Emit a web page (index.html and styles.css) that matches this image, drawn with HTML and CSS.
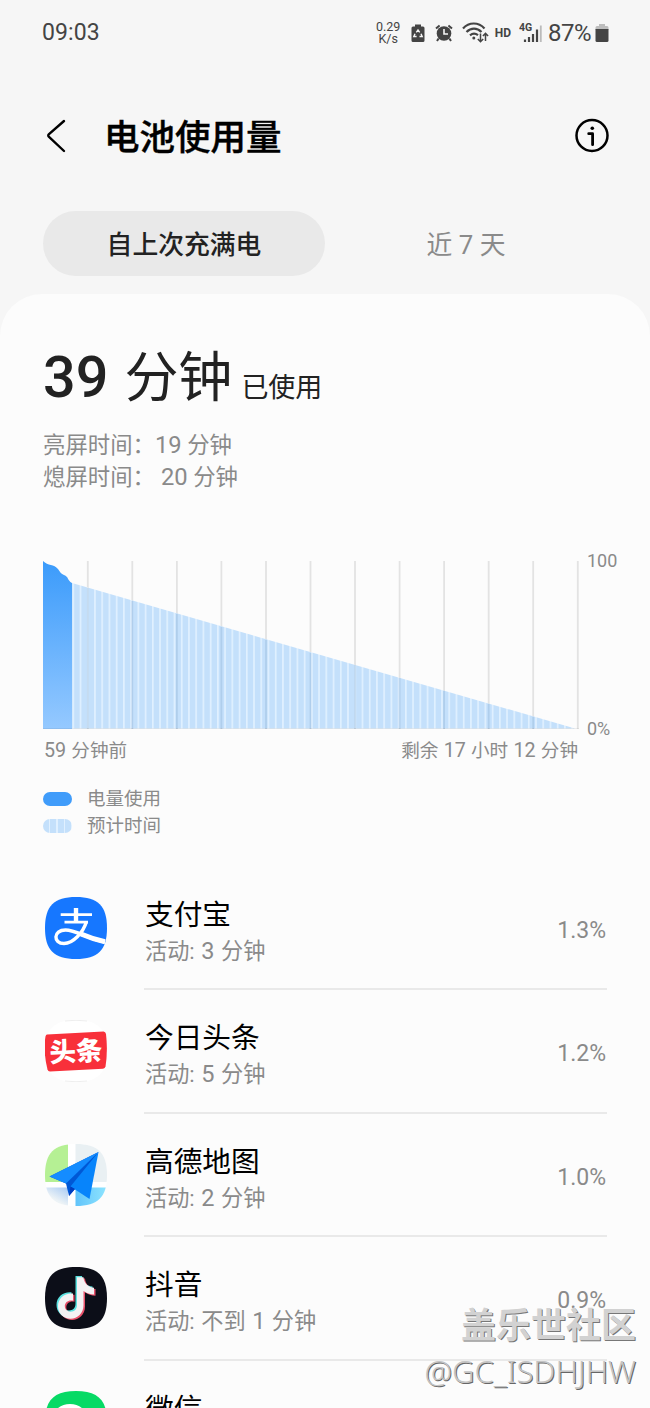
FILE: index.html
```html
<!DOCTYPE html>
<html lang="zh-CN">
<head>
    <meta charset="UTF-8">
    <meta name="viewport" content="width=device-width, initial-scale=1.0">
    <title>电池使用量</title>
    <link rel="stylesheet" href="styles.css">
</head>
<body>

    <div class="screen">
        <!-- Status bar -->
        <div class="status-bar">
            <span class="clock">09:03</span>
            <div class="status-icons">
                <div class="net-speed"><span>0.29</span><span>K/s</span></div>
                <svg class="ic-saver" width="14" height="20" viewBox="0 0 14 20">
                    <path d="M4 1.5h6v2h2a1.5 1.5 0 0 1 1.5 1.5v12.500a1.500 1.500 0 0 1-1.500 1.500H2a1.500 1.500 0 0 1-1.500-1.500V5A1.500 1.500 0 0 1 2 3.500h2z" fill="#444"/>
                    <path d="M5.300 9.300 7 7l1.700 2.300M10 10.800l1.200 2.700H8.500M5.600 13.500H2.800L4 10.800" fill="none" stroke="#f6f6f6" stroke-width="1.400"/>
                </svg>
                <svg class="ic-alarm" width="18" height="18" viewBox="0 0 18 18">
                    <circle cx="9" cy="9.500" r="7.300" fill="#444"/>
                    <path d="M1 4.500 4.600 1.500M17 4.500l-3.600-3M3.600 14.500 2 17M14.400 14.500 16 17" stroke="#444" stroke-width="2" fill="none"/>
                    <path d="M9 5v5h4" stroke="#f6f6f6" stroke-width="1.600" fill="none"/>
                </svg>
                <svg class="ic-wifi" width="27" height="22" viewBox="0 0 27 22">
                    <g fill="none" stroke="#444" stroke-width="2.200">
                        <path d="M1 6.500C7-.2 16.500-.2 22.500 6.500"/>
                        <path d="M4.500 10c4.500-4.400 10.500-4.400 15 0"/>
                        <path d="M8 13.300c2.600-2.200 5.400-2.200 8-.2"/>
                    </g>
                    <circle cx="11.800" cy="16" r="1.500" fill="#444"/>
                    <path d="M18.500 11.500v8M15.800 17l2.700 2.700 2.700-2.700M23.500 19v-7.500M20.900 14l2.600-2.700 2.600 2.700" fill="none" stroke="#444" stroke-width="1.500"/>
                </svg>
                <span class="hd">HD</span>
                <svg class="ic-signal" width="24" height="22" viewBox="0 0 24 22">
                    <text x="0" y="9" class="sig-text">4G</text>
                    <path d="M6 20v-2.500M10 20v-5M14 20v-8M18 20V7.500" stroke="#444" stroke-width="2.200"/>
                    <path d="M21.800 20V3.500" stroke="#bbb" stroke-width="1.800"/>
                </svg>
                <span class="percent">87%</span>
                <svg class="ic-battery" width="14" height="20" viewBox="0 0 14 20">
                    <path d="M4 1h6v2h2a1.500 1.500 0 0 1 1.500 1.500V7H.5V4.500A1.500 1.500 0 0 1 2 3h2z" fill="#bdbdbd"/>
                    <path d="M.5 6h13v11.500a1.500 1.500 0 0 1-1.500 1.500H2a1.500 1.500 0 0 1-1.500-1.500z" fill="#444"/>
                </svg>
            </div>
        </div>

        <!-- Title -->
        <header class="header">
            <svg class="back" width="20" height="36" viewBox="0 0 20 36">
                <path d="M18 3 3 16.100q-1.500 1.400 0 2.800L18 33" fill="none" stroke="#000" stroke-width="2.400" stroke-linecap="round"/>
            </svg>
            <h1>电池使用量</h1>
            <svg class="info" width="36" height="36" viewBox="0 0 36 36">
                <circle cx="18" cy="17.500" r="15.500" fill="none" stroke="#000" stroke-width="2.500"/>
                <circle cx="18.300" cy="10.200" r="1.800"/>
                <path d="M14.700 15.700h3.900v11" fill="none" stroke="#000" stroke-width="2.800" stroke-linecap="round" stroke-linejoin="round"/>
            </svg>
        </header>

        <!-- Tabs -->
        <nav class="tabs">
            <div class="tab active">自上次充满电</div>
            <div class="tab">近 7 天</div>
        </nav>

        <main class="card">
            <div class="usage">
                <span class="usage-num">39</span>
                <span class="usage-unit">分钟</span>
                <span class="usage-label">已使用</span>
            </div>
            <p class="detail">亮屏时间：<span class="num on">19</span> 分钟</p>
            <p class="detail">熄屏时间：<span class="num off">20</span> 分钟</p>

            <!-- Battery chart -->
            <div class="chart">
                <svg class="plot" width="536" height="168" viewBox="0 0 536 168">
                    <defs>
                        <linearGradient id="used" x1="0" y1="0" x2="0" y2="1">
                            <stop offset="0" stop-color="#3b9bfb"/>
                            <stop offset="1" stop-color="#95c9ff"/>
                        </linearGradient>
                        <pattern id="stripes" width="7.230" height="168" patternUnits="userSpaceOnUse" x="0.500">
                            <rect width="7.230" height="168" fill="#c4e0fb"/>
                            <rect width="1.700" height="168" fill="#e0f0ff"/>
                        </pattern>
                    </defs>
                    <path d="M44.800 0v168M89.300 0v168M133.900 0v168M178.400 0v168M223 0v168M267.500 0v168M312 0v168M356.600 0v168M401.100 0v168M445.700 0v168M490.200 0v168M534.800 0v168" stroke="#e3e3e3" stroke-width="1.800"/>
                    <path d="M29 22 532 167.500H29z" fill="url(#stripes)"/>
                    <path d="M44.800 27v141M89.300 40v128M133.900 53v115M178.400 66v102M223 79v89M267.500 92v76M312 104v64M356.600 117v51M401.100 130v38M445.700 143v25M490.200 156v12" stroke="#5580aa" stroke-opacity=".18" stroke-width="1.800"/>
                    <path d="M0 0C5 5 11 3 15 8c2 3 3 5 6 6 5 2 3 5 8 8V168H0z" fill="url(#used)"/>
                    <path d="M0 167.500h536" stroke="#000" stroke-opacity=".06"/>
                </svg>
                <div class="scale"><span>100</span><span>0%</span></div>
            </div>
            <div class="axis">
                <span><span class="num">59</span> 分钟前</span>
                <span>剩余 <span class="num">17</span> 小时 <span class="num">12</span> 分钟</span>
            </div>
            <ul class="legend">
                <li><i class="swatch used"></i>电量使用</li>
                <li><i class="swatch expected"></i>预计时间</li>
            </ul>

            <!-- Apps -->
            <ul class="apps">
                <li class="app">
                    <svg class="icon" viewBox="0 0 62 62">
                        <path d="M31 0C53 0 62 9 62 31S53 62 31 62 0 53 0 31 9 0 31 0z" fill="#1677ff"/>
                        <g fill="none" stroke="#fff">
                            <path d="M15.700 17.700h31.300M19.500 25.200h23.500" stroke-width="2.800"/>
                            <path d="M31 11v14" stroke-width="4.400"/>
                            <path d="M41.500 24.500C38 36 28 46.500 19 46.500c-11 0-11-13.500 1.500-13.500C31 33 42 41.500 60 45" stroke-width="3.400"/>
                            <path d="M36 37c8 3.500 14 5.500 24 7.700" stroke-width="5"/>
                        </g>
                    </svg>
                    <div class="app-body">
                        <div><h2>支付宝</h2><p>活动: <span class="num">3</span> 分钟</p></div>
                        <span class="value">1.3%</span>
                    </div>
                </li>
                <li class="app">
                    <svg class="icon" viewBox="0 0 62 62">
                        <path d="M31 0C53 0 62 9 62 31S53 62 31 62 0 53 0 31 9 0 31 0z" fill="#fff"/>
                        <path d="M20 1Q31-.5 42 1M20 61q11 1.500 22 0" fill="none" stroke="#eee"/>
                        <path d="M2 14.500 58.500 11.500Q60.500 11.500 61 14Q63 31 60.500 46.500Q60 48.500 58 48.800L5 51.500Q3 51.500 2.500 49.500Q-2 31 .5 16.500Q1 14.700 2 14.500z" fill="#f8303a"/>
                        <text x="31" y="41" text-anchor="middle" transform="rotate(-3 31 31)" class="toutiao">头条</text>
                    </svg>
                    <div class="app-body">
                        <div><h2>今日头条</h2><p>活动: <span class="num">5</span> 分钟</p></div>
                        <span class="value">1.2%</span>
                    </div>
                </li>
                <li class="app">
                    <svg class="icon" viewBox="0 0 62 62">
                        <defs>
                            <clipPath id="squircle"><path d="M31 0C53 0 62 9 62 31S53 62 31 62 0 53 0 31 9 0 31 0z"/></clipPath>
                            <linearGradient id="shade" x1="1" y1="0" x2="0.300" y2="1">
                                <stop offset="0" stop-color="#a9cbf4"/>
                                <stop offset="0.700" stop-color="#edf3f6"/>
                            </linearGradient>
                            <linearGradient id="water" x1="0" y1="0" x2="1" y2="0">
                                <stop offset="0" stop-color="#62c4fa"/>
                                <stop offset="1" stop-color="#8de4ff"/>
                            </linearGradient>
                        </defs>
                        <g clip-path="url(#squircle)">
                            <path d="M0 0h62v62H0z" fill="#fff"/>
                            <path d="M0 0h23v38H0z" fill="#b5f094"/>
                            <path d="M30.500 0H62v38H30.500z" fill="#e9f0f3"/>
                            <path d="M0 43.500h23V62H0z" fill="url(#shade)"/>
                            <path d="M30.500 43.500H62V62H30.500z" fill="url(#water)"/>
                        </g>
                        <path d="M53.500 8 4.500 32.500 21 39.500 24 52 30 45z" fill="#0058d6"/>
                        <path d="M53.500 8 4.500 32.500 21 39.500z" fill="#148cff"/>
                        <path d="M53.500 8 25.500 42.500 44.500 55z" fill="#0784fb"/>
                        <path d="M25.500 42.500 30 45 24 52z" fill="#003ec0"/>
                    </svg>
                    <div class="app-body">
                        <div><h2>高德地图</h2><p>活动: <span class="num">2</span> 分钟</p></div>
                        <span class="value">1.0%</span>
                    </div>
                </li>
                <li class="app">
                    <svg class="icon" viewBox="0 0 62 62">
                        <path d="M31 0C53 0 62 9 62 31S53 62 31 62 0 53 0 31 9 0 31 0z" fill="#0c0e18"/>
                        <defs>
                            <path id="note" d="M31 10h6.500c.5 6 4.500 10 10.500 10.500v6.800c-4 0-7.500-1.200-10.500-3.500V38c0 8-6 13.500-13 13.500S12 46 12 39c0-8 6.500-13.500 15-12.700v7c-4.500-1-8.200 1.500-8.200 5.500 0 3.300 2.500 5.700 5.700 5.700 3.800 0 6.500-2.500 6.500-6.700z"/>
                        </defs>
                        <use href="#note" x="-.5" y="-1" fill="#5ce1e0"/>
                        <use href="#note" x="2.500" y="1.500" fill="#e8506a"/>
                        <use href="#note" x="1" y=".3" fill="#f4f1f3"/>
                    </svg>
                    <div class="app-body">
                        <div><h2>抖音</h2><p>活动: 不到 <span class="num">1</span> 分钟</p></div>
                        <span class="value">0.9%</span>
                    </div>
                </li>
                <li class="app">
                    <svg class="icon" viewBox="0 0 62 62">
                        <path d="M31 0C53 0 62 9 62 31S53 62 31 62 0 53 0 31 9 0 31 0z" fill="#07da65"/>
                        <ellipse cx="25" cy="27" rx="17" ry="14" fill="#fff"/>
                    </svg>
                    <div class="app-body">
                        <div><h2>微信</h2></div>
                    </div>
                </li>
            </ul>
        </main>

        <div class="watermark">
            <div class="community">盖乐世社区</div>
            <div class="user">@GC_ISDHJHW</div>
        </div>
    </div>

</body>
</html>
```
FILE: styles.css
```css
* {
    box-sizing: border-box;
    margin: 0;
    padding: 0;
}

body {
    font-family: Roboto, "Noto Sans CJK SC", sans-serif;
    background-color: #f6f6f6;
    color: #222;
}

ul {
    list-style: none;
}

svg {
    display: block;
    flex: none;
}

.screen {
    position: relative;
    width: 650px;
    height: 1408px;
    overflow: hidden;
}

/* Status bar */
.status-bar {
    display: flex;
    justify-content: space-between;
    align-items: center;
    height: 65px;
    padding: 0 41px 0 42px;
    color: #444;
}

.clock {
    font-size: 23px;
    letter-spacing: 0.1px;
}

.status-icons {
    display: flex;
    align-items: center;
}

.net-speed {
    display: flex;
    flex-direction: column;
    align-items: center;
    width: 25px;
    margin-right: 10px;
    font-size: 12.500px;
    line-height: 12px;
}

.ic-alarm {
    margin: 0 9px 0 10px;
}

.hd {
    margin: 0 8px 0 6px;
    font-size: 12px;
    font-weight: 700;
}

.sig-text {
    font-size: 10.500px;
    font-weight: 700;
    fill: #444;
}

.percent {
    margin: 0 4px 0 5px;
    font-size: 24px;
    letter-spacing: -0.5px;
}

/* Header */
.header {
    display: flex;
    align-items: center;
    height: 146px;
    padding: 0 40px 4px 46px;
}

h1 {
    flex: 1;
    margin-left: 38px;
    padding-top: 4px;
    font-size: 35.500px;
    font-weight: 500;
    line-height: 48px;
    color: #000;
    -webkit-text-stroke: 0.4px #000;
}

/* Tabs */
.tabs {
    display: flex;
    height: 83px;
    padding: 0 43px;
}

.tab {
    width: 282px;
    height: 65px;
    border-radius: 33px;
    font-size: 25.800px;
    line-height: 68px;
    text-align: center;
    color: #8a8a8a;
}

.tab.active {
    background-color: #e9e9e9;
    font-weight: 500;
    color: #222;
}

/* Main card */
.card {
    height: 1114px;
    padding: 51px 43px 0;
    border-radius: 42px 42px 0 0;
    background-color: #fcfcfc;
}

.usage {
    display: flex;
    align-items: baseline;
    height: 84px;
    line-height: 66px;
}

.usage-num {
    font-size: 57.500px;
    font-weight: 500;
}

.usage-unit {
    margin-left: 16px;
    font-size: 54px;
}

.usage-label {
    margin-left: 9px;
    font-size: 27px;
}

.detail {
    font-size: 22.400px;
    line-height: 32px;
    color: #8a8a8a;
}

.num {
    font-size: 1.06em;
}

.detail .off {
    margin-left: 6px;
}

/* Chart */
.chart {
    display: flex;
    justify-content: space-between;
    margin-top: 68px;
    margin-right: -12px;
}

.scale {
    display: flex;
    flex-direction: column;
    justify-content: space-between;
    width: 32px;
    margin: -10px 0;
    font-size: 18px;
    line-height: 20px;
    color: #8a8a8a;
}

.axis {
    display: flex;
    justify-content: space-between;
    width: 535px;
    height: 57px;
    padding-left: 1px;
    font-size: 18.600px;
    line-height: 44px;
    word-spacing: 0.600px;
    color: #8a8a8a;
}

.legend {
    height: 81px;
    font-size: 18.500px;
    line-height: 26.500px;
    color: #8a8a8a;
}

.legend li {
    display: flex;
    align-items: center;
}

.swatch {
    width: 29px;
    height: 14px;
    margin-right: 15px;
    border-radius: 7px;
}

.swatch.used {
    background-color: #409cfa;
}

.swatch.expected {
    background: repeating-linear-gradient(90deg, #c4e0fb 0 6px, #e0f0ff 6px 7.300px);
}

/* App list */
.app {
    display: flex;
    height: 123.400px;
}

.icon {
    width: 62px;
    height: 62px;
    margin: 30px 37px 0 2px;
}

.app-body {
    flex: 1;
    display: flex;
    justify-content: space-between;
    border-bottom: 2px solid #e9e9e9;
    padding: 28px 1px 0;
}

.app h2 {
    font-size: 28.700px;
    font-weight: 400;
    line-height: 40px;
    color: #000;
}

.app p {
    font-size: 22.200px;
    line-height: 32px;
    word-spacing: 1px;
    color: #8a8a8a;
}

.value {
    font-size: 23px;
    line-height: 72px;
    color: #8a8a8a;
}

.toutiao {
    font-size: 26.500px;
    font-weight: 900;
    fill: #fff;
}

/* Watermark in the corner */
.watermark {
    position: absolute;
    right: 14px;
    bottom: 15px;
    text-align: right;
    white-space: nowrap;
}

.community {
    font-size: 35px;
    font-weight: 700;
    line-height: 44px;
    color: #d2d2d2;
    text-shadow: 1px 1px 0 #777;
}

.user {
    font-family: "Noto Sans", sans-serif;
    font-size: 31px;
    font-weight: 300;
    line-height: 44px;
    color: #c4c4c4;
    text-shadow: 1px 1px 0 #666;
}
```
